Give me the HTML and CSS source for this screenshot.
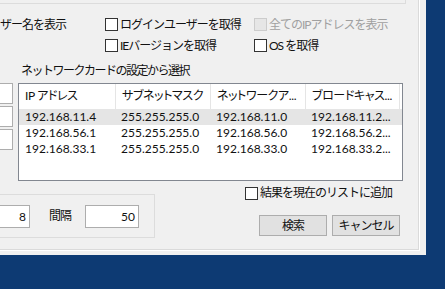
FILE: index.html
```html
<!DOCTYPE html>
<html lang="ja">
<head>
<meta charset="utf-8">
<link rel="stylesheet" href="styles.css">
</head>
<body>
<div class="window">
  <div class="panel">
    <div class="topgroup"></div>
    <div class="opts">
      <span class="cut">ザー名を表示</span>
      <label class="chk"><span class="box"></span>ログインユーザーを取得</label>
      <label class="chk disabled"><span class="box"></span>全てのIPアドレスを表示</label>
      <span></span>
      <label class="chk"><span class="box"></span>IEバージョンを取得</label>
      <label class="chk"><span class="box"></span>OS を取得</label>
    </div>
    <div class="netlabel">ネットワークカードの設定から選択</div>
    <div class="main">
      <div class="sideboxes">
        <div class="stb"></div>
        <div class="stb"></div>
        <div class="stb"></div>
      </div>
      <div class="listview">
        <div class="lvrow head">
          <span>IP アドレス</span><span>サブネットマスク</span><span>ネットワークア...</span><span>ブロードキャス...</span>
        </div>
        <div class="lvrow sel">
          <span>192.168.11.4</span><span>255.255.255.0</span><span>192.168.11.0</span><span>192.168.11.2...</span>
        </div>
        <div class="lvrow">
          <span>192.168.56.1</span><span>255.255.255.0</span><span>192.168.56.0</span><span>192.168.56.2...</span>
        </div>
        <div class="lvrow">
          <span>192.168.33.1</span><span>255.255.255.0</span><span>192.168.33.0</span><span>192.168.33.2...</span>
        </div>
      </div>
    </div>
    <div class="bottom">
      <div class="bgroup">
        <div class="tb first">8</div>
        <span class="glabel">間隔</span>
        <div class="tb second">50</div>
      </div>
      <div class="actions">
        <label class="chk"><span class="box"></span>結果を現在のリストに追加</label>
        <div class="buttons">
          <button class="btn">検索</button>
          <button class="btn">キャンセル</button>
        </div>
      </div>
    </div>
  </div>
</div>
</body>
</html>
```

FILE: styles.css
```css
* { box-sizing: border-box; }
html, body { margin: 0; padding: 0; }
body {
  background: #0d3a73;
  width: 445px;
  height: 289px;
  overflow: hidden;
  font-family: Lato, "Noto Sans CJK JP", sans-serif;
  font-size: 12px;
  color: #111;
}
.window {
  width: 426px;
  height: 255px;
  background: #f0f0f0;
  overflow: hidden;
}
.panel {
  width: 420px;
  height: 251px;
  border-right: 1px solid #fff;
  border-bottom: 1px solid #fff;
  box-shadow: inset -1px -1px 0 #dadada;
}
.topgroup {
  width: 406px;
  height: 4px;
  border-right: 1px solid #dcdcdc;
  border-bottom: 1px solid #dcdcdc;
}
.opts {
  display: grid;
  grid-template-columns: 105px 149px auto;
  grid-auto-rows: 21px;
  margin-top: 10px;
  align-items: center;
}
.cut, .chk, .glabel, .btn { letter-spacing: -1px; }
.cut { line-height: 16px; white-space: nowrap; }
.chk {
  display: flex;
  align-items: center;
  white-space: nowrap;
  line-height: 16px;
}
.box {
  width: 13px;
  height: 13px;
  border: 1px solid #333;
  background: #fff;
  flex: none;
  margin-right: 2px;
}
.chk.disabled { color: #a0a0a0; }
.chk.disabled .box { border-color: #cccccc; background: #e6e6e6; }
.netlabel {
  margin: 7px 0 0 21px;
  height: 16px;
  line-height: 16px;
  letter-spacing: -1.5px;
  white-space: nowrap;
}
.main {
  display: flex;
  margin-top: 4px;
}
.sideboxes {
  width: 13px;
  display: flex;
  flex-direction: column;
  gap: 2px;
}
.stb {
  height: 21px;
  background: #fff;
  border: 1px solid #adadad;
  border-left: none;
}
.listview {
  margin-left: 5px;
  width: 385px;
  height: 98px;
  border: 1px solid #828790;
  background: #fff;
}
.lvrow {
  display: grid;
  grid-template-columns: 96px 95px 95px 95px;
  height: 16px;
  line-height: 16px;
  white-space: nowrap;
}
.lvrow span { padding-left: 6px; overflow: hidden; }
.lvrow.head {
  height: 25px;
  line-height: 24px;
  font-feature-settings: "palt" 1;
  letter-spacing: -0.4px;
}
.lvrow.head span + span { border-left: 1px solid #e5e5e5; }
.lvrow.head span:last-child { border-right: 1px solid #e5e5e5; }
.lvrow.sel { background: #e5e5e5; }
.bottom {
  display: flex;
}
.bgroup {
  width: 155px;
  height: 44px;
  margin-top: 13px;
  border-right: 1px solid #dcdcdc;
  border-top: 1px solid #dcdcdc;
  border-bottom: 1px solid #dcdcdc;
  display: flex;
  align-items: center;
}
.tb {
  height: 23px;
  background: #fff;
  border: 1px solid #adadad;
  text-align: right;
  padding-right: 3px;
  line-height: 21px;
}
.tb.first { width: 53px; margin-left: -23px; }
.glabel { margin-left: 19px; width: 24px; line-height: 16px; white-space: nowrap; }
.tb.second { width: 54px; margin-left: 12px; }
.actions {
  margin-left: 90px;
  display: flex;
  flex-direction: column;
}
.actions .chk { height: 20px; margin-top: 2px; }
.buttons {
  display: flex;
  gap: 5px;
  margin: 12px 0 0 14px;
}
.btn {
  width: 68px;
  height: 21px;
  background: #e1e1e1;
  border: 1px solid #adadad;
  border-radius: 0;
  font: inherit;
  color: #111;
  padding: 0;
  line-height: 19px;
}
```
